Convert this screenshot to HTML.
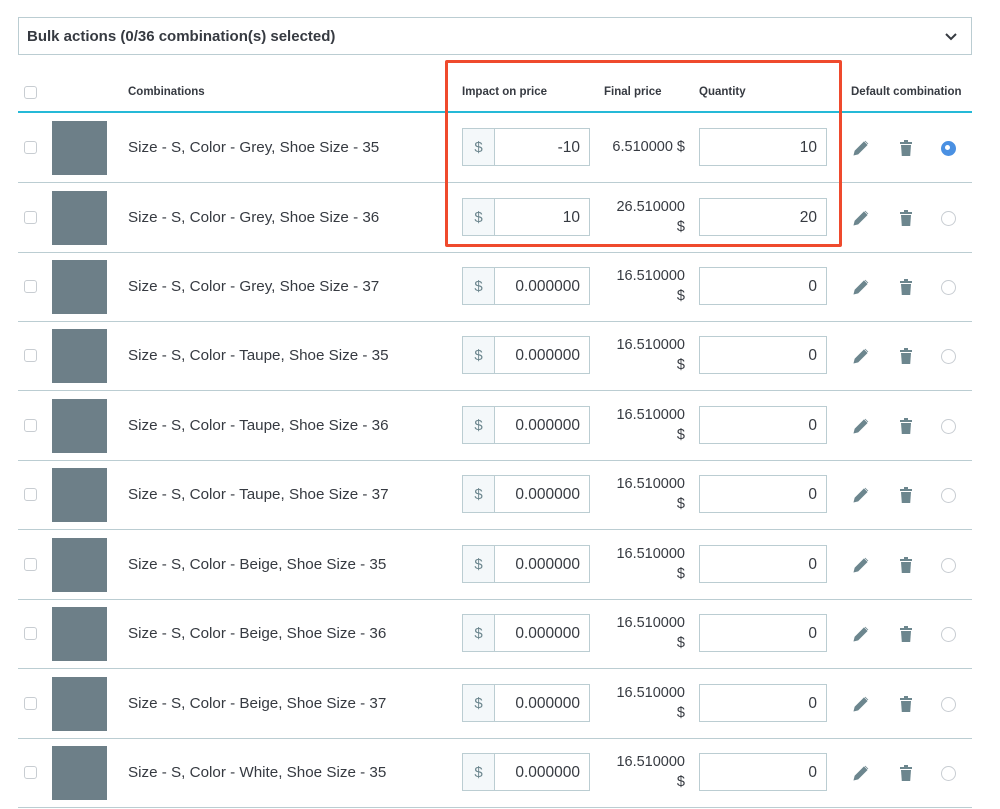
<!DOCTYPE html>
<html><head><style>
*{box-sizing:border-box;margin:0;padding:0}
body{width:1000px;height:809px;background:#fff;font-family:"Liberation Sans",sans-serif;color:#363a41;position:relative;overflow:hidden}
.a{position:absolute}
.card{left:18px;top:17px;width:954px;height:38px;border:1px solid #bbcdd2;}
.card span{position:absolute;left:8px;top:10px;font-weight:bold;font-size:15px;color:#363a41}
.th{top:86px;font-size:11.5px;font-weight:bold;color:#363a41}
.cb{width:13px;height:13px;border:1px solid #c8cdd2;border-radius:3px;background:#fff}
.row{left:18px;width:954px;height:70px;border-bottom:1px solid #bbcdd2}
.thumb{left:34px;top:8px;width:55px;height:54px;background:#6d7f88}
.name{left:110px;top:26px;font-size:15.2px;color:#363a41}
.grp{left:444px;top:15px;width:128px;height:38px;border:1px solid #bbcdd2;display:flex}
.grp .ad{width:32px;background:#f4f8fa;border-right:1px solid #bbcdd2;color:#6c868e;font-size:15px;text-align:center;line-height:37px}
.grp .v{flex:1;text-align:right;padding-right:9px;line-height:37px;font-size:15.5px}
.fp{left:566px;width:101px;text-align:right;font-size:14.5px;line-height:20px}
.q{left:681px;top:15px;width:128px;height:38px;border:1px solid #bbcdd2;text-align:right;padding-right:9px;line-height:37px;font-size:15.5px}
.rad{left:923px;top:28px;width:15px;height:15px;border:1px solid #c8cdd2;border-radius:50%}
.rad.on{background:#4a90e2;border:4px solid #4a90e2}
.rad.on::after{content:"";position:absolute;left:0;top:0;width:5px;height:5px;border-radius:50%;background:#fff}
</style></head><body>
<div class="a card"><span>Bulk actions (0/36 combination(s) selected)</span>
<svg class="a" style="left:926px;top:14px" width="12" height="9" viewBox="0 0 12 9"><path d="M1 2l5 5 5-5" fill="none" stroke="#363a41" stroke-width="2"/></svg></div>
<div class="a cb" style="left:24px;top:86px"></div>
<div class="a th" style="left:128px">Combinations</div>
<div class="a th" style="left:462px">Impact on price</div>
<div class="a th" style="left:604px">Final price</div>
<div class="a th" style="left:699px">Quantity</div>
<div class="a th" style="left:851px">Default combination</div>
<div class="a" style="left:18px;top:111px;width:954px;height:2px;background:#25b9d7"></div>

<svg width="0" height="0" style="position:absolute"><defs>
<g id="pen"><path d="M1 15l1-4 9-9 3 3-9 9z M12 1l3 3" fill="#6c868e" stroke="#6c868e" stroke-width="0.8"/></g>
<g id="tr"><rect x="0" y="2" width="12" height="2" fill="#6c868e"/><rect x="4" y="0" width="4" height="3" fill="#6c868e"/><path d="M1 5h10l-0.8 11h-8.4z" fill="#6c868e"/></g>
</defs></svg>

<div class="a row" style="top:113px"><div class="a cb" style="left:6px;top:28px"></div><div class="a thumb"></div><div class="a name">Size - S, Color - Grey, Shoe Size - 35</div><div class="a grp"><div class="ad">$</div><div class="v">-10</div></div><div class="a fp" style="top:24px">6.510000 $</div><div class="a q">10</div><svg class="a" style="left:835px;top:27px" width="16" height="16"><use href="#pen"/></svg><svg class="a" style="left:882px;top:27px" width="12" height="16"><use href="#tr"/></svg><div class="a rad on"></div></div>
<div class="a row" style="top:183px"><div class="a cb" style="left:6px;top:28px"></div><div class="a thumb"></div><div class="a name">Size - S, Color - Grey, Shoe Size - 36</div><div class="a grp"><div class="ad">$</div><div class="v">10</div></div><div class="a fp" style="top:14px">26.510000<br>$</div><div class="a q">20</div><svg class="a" style="left:835px;top:27px" width="16" height="16"><use href="#pen"/></svg><svg class="a" style="left:882px;top:27px" width="12" height="16"><use href="#tr"/></svg><div class="a rad"></div></div>
<div class="a row" style="top:252px"><div class="a cb" style="left:6px;top:28px"></div><div class="a thumb"></div><div class="a name">Size - S, Color - Grey, Shoe Size - 37</div><div class="a grp"><div class="ad">$</div><div class="v">0.000000</div></div><div class="a fp" style="top:14px">16.510000<br>$</div><div class="a q">0</div><svg class="a" style="left:835px;top:27px" width="16" height="16"><use href="#pen"/></svg><svg class="a" style="left:882px;top:27px" width="12" height="16"><use href="#tr"/></svg><div class="a rad"></div></div>
<div class="a row" style="top:321px"><div class="a cb" style="left:6px;top:28px"></div><div class="a thumb"></div><div class="a name">Size - S, Color - Taupe, Shoe Size - 35</div><div class="a grp"><div class="ad">$</div><div class="v">0.000000</div></div><div class="a fp" style="top:14px">16.510000<br>$</div><div class="a q">0</div><svg class="a" style="left:835px;top:27px" width="16" height="16"><use href="#pen"/></svg><svg class="a" style="left:882px;top:27px" width="12" height="16"><use href="#tr"/></svg><div class="a rad"></div></div>
<div class="a row" style="top:391px"><div class="a cb" style="left:6px;top:28px"></div><div class="a thumb"></div><div class="a name">Size - S, Color - Taupe, Shoe Size - 36</div><div class="a grp"><div class="ad">$</div><div class="v">0.000000</div></div><div class="a fp" style="top:14px">16.510000<br>$</div><div class="a q">0</div><svg class="a" style="left:835px;top:27px" width="16" height="16"><use href="#pen"/></svg><svg class="a" style="left:882px;top:27px" width="12" height="16"><use href="#tr"/></svg><div class="a rad"></div></div>
<div class="a row" style="top:460px"><div class="a cb" style="left:6px;top:28px"></div><div class="a thumb"></div><div class="a name">Size - S, Color - Taupe, Shoe Size - 37</div><div class="a grp"><div class="ad">$</div><div class="v">0.000000</div></div><div class="a fp" style="top:14px">16.510000<br>$</div><div class="a q">0</div><svg class="a" style="left:835px;top:27px" width="16" height="16"><use href="#pen"/></svg><svg class="a" style="left:882px;top:27px" width="12" height="16"><use href="#tr"/></svg><div class="a rad"></div></div>
<div class="a row" style="top:530px"><div class="a cb" style="left:6px;top:28px"></div><div class="a thumb"></div><div class="a name">Size - S, Color - Beige, Shoe Size - 35</div><div class="a grp"><div class="ad">$</div><div class="v">0.000000</div></div><div class="a fp" style="top:14px">16.510000<br>$</div><div class="a q">0</div><svg class="a" style="left:835px;top:27px" width="16" height="16"><use href="#pen"/></svg><svg class="a" style="left:882px;top:27px" width="12" height="16"><use href="#tr"/></svg><div class="a rad"></div></div>
<div class="a row" style="top:599px"><div class="a cb" style="left:6px;top:28px"></div><div class="a thumb"></div><div class="a name">Size - S, Color - Beige, Shoe Size - 36</div><div class="a grp"><div class="ad">$</div><div class="v">0.000000</div></div><div class="a fp" style="top:14px">16.510000<br>$</div><div class="a q">0</div><svg class="a" style="left:835px;top:27px" width="16" height="16"><use href="#pen"/></svg><svg class="a" style="left:882px;top:27px" width="12" height="16"><use href="#tr"/></svg><div class="a rad"></div></div>
<div class="a row" style="top:669px"><div class="a cb" style="left:6px;top:28px"></div><div class="a thumb"></div><div class="a name">Size - S, Color - Beige, Shoe Size - 37</div><div class="a grp"><div class="ad">$</div><div class="v">0.000000</div></div><div class="a fp" style="top:14px">16.510000<br>$</div><div class="a q">0</div><svg class="a" style="left:835px;top:27px" width="16" height="16"><use href="#pen"/></svg><svg class="a" style="left:882px;top:27px" width="12" height="16"><use href="#tr"/></svg><div class="a rad"></div></div>
<div class="a row" style="top:738px"><div class="a cb" style="left:6px;top:28px"></div><div class="a thumb"></div><div class="a name">Size - S, Color - White, Shoe Size - 35</div><div class="a grp"><div class="ad">$</div><div class="v">0.000000</div></div><div class="a fp" style="top:14px">16.510000<br>$</div><div class="a q">0</div><svg class="a" style="left:835px;top:27px" width="16" height="16"><use href="#pen"/></svg><svg class="a" style="left:882px;top:27px" width="12" height="16"><use href="#tr"/></svg><div class="a rad"></div></div>

<div class="a" style="left:445px;top:60px;width:397px;height:187px;border:3px solid #ef4a2d;border-radius:2px"></div>
</body></html>
